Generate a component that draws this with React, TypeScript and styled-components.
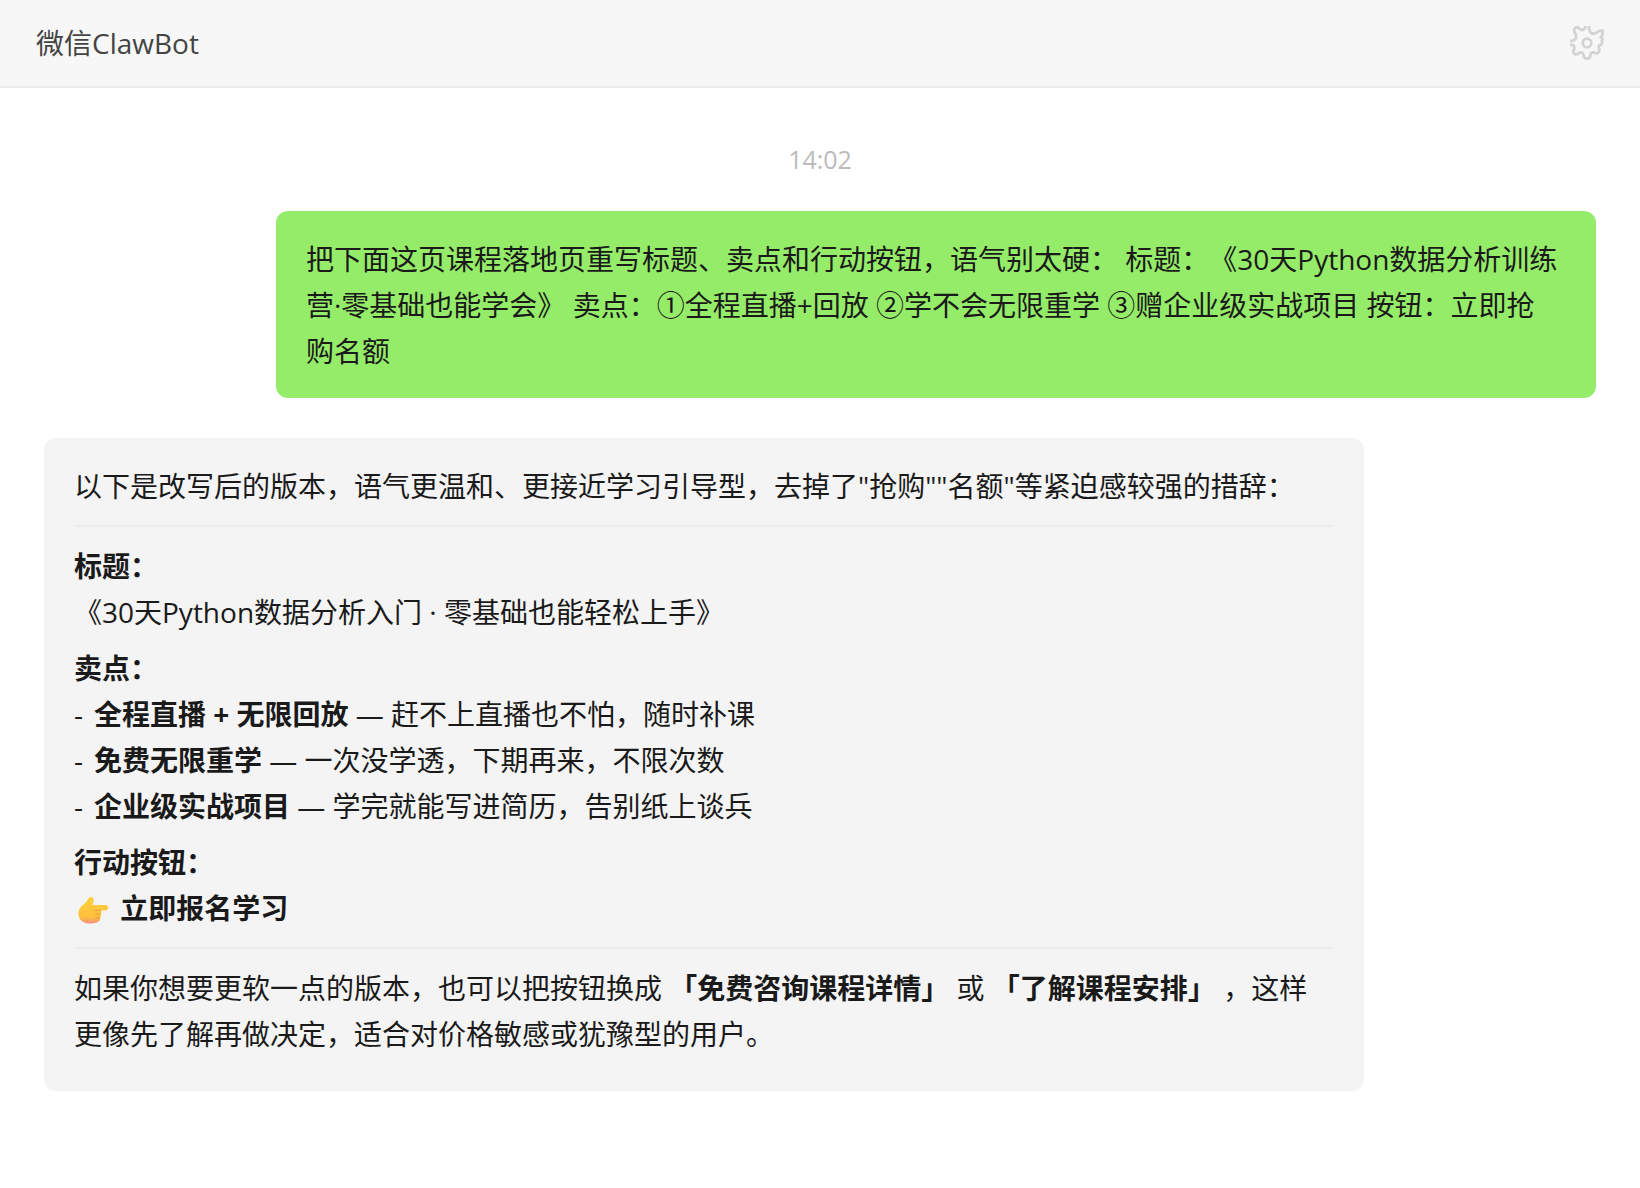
import React from "react";
import styled, { createGlobalStyle } from "styled-components";

const GlobalStyle = createGlobalStyle`
  *, *::before, *::after { box-sizing: border-box; }
  body {
    margin: 0;
    background: #ffffff;
    color: #1a1a1a;
    font-family: "Open Sans", "Noto Sans CJK SC", sans-serif;
    font-size: 28px;
    line-height: 46px;
    text-spacing-trim: space-all;
  }
`;

const Page = styled.div`
  min-height: 100vh;
  display: flex;
  flex-direction: column;
`;

const Header = styled.header`
  display: flex;
  align-items: center;
  justify-content: space-between;
  padding: 20px 36px;
  background: #f7f7f7;
  border-bottom: 2px solid #ececec;
`;

const Title = styled.h1`
  margin: 0;
  font-size: 28px;
  font-weight: 400;
  color: #444444;
`;

const IconButton = styled.button`
  display: flex;
  padding: 0;
  border: 0;
  background: none;
  color: #d3d3d3;
  cursor: pointer;
`;

const Thread = styled.main`
  flex: 1;
  display: flex;
  flex-direction: column;
  padding: 48px 44px;
`;

const Time = styled.time`
  align-self: center;
  margin-bottom: 29px;
  font-size: 25px;
  color: #bbbbbb;
`;

const Bubble = styled.article<{ $own?: boolean }>`
  width: calc(100% - 232px);
  align-self: ${(p) => (p.$own ? "flex-end" : "flex-start")};
  padding: 25px 30px 24px;
  border-radius: 12px;
  background: ${(p) => (p.$own ? "#95ec69" : "#f4f4f4")};

  & + & {
    margin-top: 40px;
  }
`;

const Paragraph = styled.p<{ $last?: boolean }>`
  margin: 0 0 ${(p) => (p.$last ? "0" : "10px")};
`;

const Unbroken = styled.span`
  white-space: nowrap;
`;

const Rule = styled.hr`
  height: 2px;
  margin: 16px 0;
  border: 0;
  background: #ededed;
`;

const Points = styled.ul`
  margin: 0 0 10px;
  padding: 0;
  list-style: none;
`;

const Point = styled.li`
  display: grid;
  grid-template-columns: 20px 1fr;
`;

const Hand = styled.svg`
  width: 39px;
  height: 29px;
  vertical-align: -5px;
`;

const points = [
  { name: "全程直播 + 无限回放", note: "赶不上直播也不怕，随时补课" },
  { name: "免费无限重学", note: "一次没学透，下期再来，不限次数" },
  { name: "企业级实战项目", note: "学完就能写进简历，告别纸上谈兵" },
];

function GearIcon() {
  return (
    <svg width="34" height="34" viewBox="0 0 34 34" fill="none" stroke="currentColor" strokeWidth="2.8" aria-hidden="true">
      <circle cx="17" cy="17" r="4.3" />
      <path d="M0 14.6C4 15.6 6.800 13 6 9.300C5.400 7 3.600 5.800 4.200 3.600C4.800 1.200 7.600 0.600 9 2.400C11.400 5.200 15.600 4 15.400 0M19.200 0C18.600 4 20 7.600 23.600 7.700C27.400 7.600 27.400 3.400 34 5M32.800 5C32.800 8.400 32.200 9.800 31 11.200C32.600 12 32.800 13.600 31.800 15C32.600 17 31.800 18.600 30.400 18.800C28.600 19.200 28.400 21 29 22.600C30 25.400 28.400 28.200 25.600 27.200C22.400 25.600 20.400 26.800 20.400 29.400C20.200 31.600 18.600 32.600 17 32.600C15.400 32.600 13.800 31.600 13.600 29.400C13.400 26.800 11.400 25.600 8.800 27.200C5.600 29.800 2.400 27.600 3.600 24.200C5.400 21.400 4.400 18.400 0 18.800" />
    </svg>
  );
}

function PointingHand() {
  return (
    <Hand viewBox="0 0 39 29" role="img" aria-label="👉">
      <defs>
        <linearGradient id="skin" x1="0" y1="0" x2="0" y2="1">
          <stop offset="0" stopColor="#ffd03c" />
          <stop offset="0.75" stopColor="#fdc03c" />
          <stop offset="1" stopColor="#f8917c" />
        </linearGradient>
      </defs>
      <path fill="url(#skin)" d="M17 2C19.200 2 20 4 19.600 6L18.600 10H31.500C35 10 35 15.400 31.500 15.400H26.500C28 16.500 27.600 18.500 26.400 19C27.600 20 27.200 22 26 22.600C26.800 24 26 25.800 24.500 26.400C23 28 19 28.400 15.500 28.400C8.500 28.400 4.500 24.500 4.500 18.500C4.500 13.500 7.500 11 10.500 8.800C13.500 6.500 14 2 17 2Z" />
      <path fill="none" stroke="#ee9a3a" strokeWidth="1" d="M20.500 15.400H27M21.500 19H26.500M21.500 22.700H26" />
    </Hand>
  );
}

export default function App() {
  return (
    <Page>
      <GlobalStyle />
      <Header>
        <Title>微信ClawBot</Title>
        <IconButton type="button" aria-label="设置">
          <GearIcon />
        </IconButton>
      </Header>
      <Thread lang="zh-CN">
        <Time dateTime="14:02">14:02</Time>
        <Bubble $own>
          <Paragraph $last>
            把下面这页课程落地页重写标题、卖点和行动按钮，语气别太硬： 标题：《30天Python数据分析训练营·零基础也能学会》 卖点：①全程直播+回放 ②学不会无限重学 ③赠企业级实战项目 按钮：立即抢<Unbroken>购名额</Unbroken>
          </Paragraph>
        </Bubble>
        <Bubble>
          <Paragraph>以下是改写后的版本，语气更温和、更接近学习引导型，去掉了"抢购""名额"等紧迫感较强的措辞：</Paragraph>
          <Rule />
          <Paragraph>
            <strong>标题：</strong>
            <br />
            《30天Python数据分析入门 · 零基础也能轻松上手》
          </Paragraph>
          <strong>卖点：</strong>
          <Points>
            {points.map((p) => (
              <Point key={p.name}>
                <span>-</span>
                <span>
                  <strong>{p.name}</strong> — {p.note}
                </span>
              </Point>
            ))}
          </Points>
          <Paragraph>
            <strong>行动按钮：</strong>
            <br />
            <PointingHand /> <strong>立即报名学习</strong>
          </Paragraph>
          <Rule />
          <Paragraph>
            如果你想要更软一点的版本，也可以把按钮换成 <strong>「免费咨询课程详情」</strong> 或 <strong>「了解课程安排」</strong> ，这样更像先了解再做决定，适合对价格敏感或犹豫型的用户。
          </Paragraph>
        </Bubble>
      </Thread>
    </Page>
  );
}
